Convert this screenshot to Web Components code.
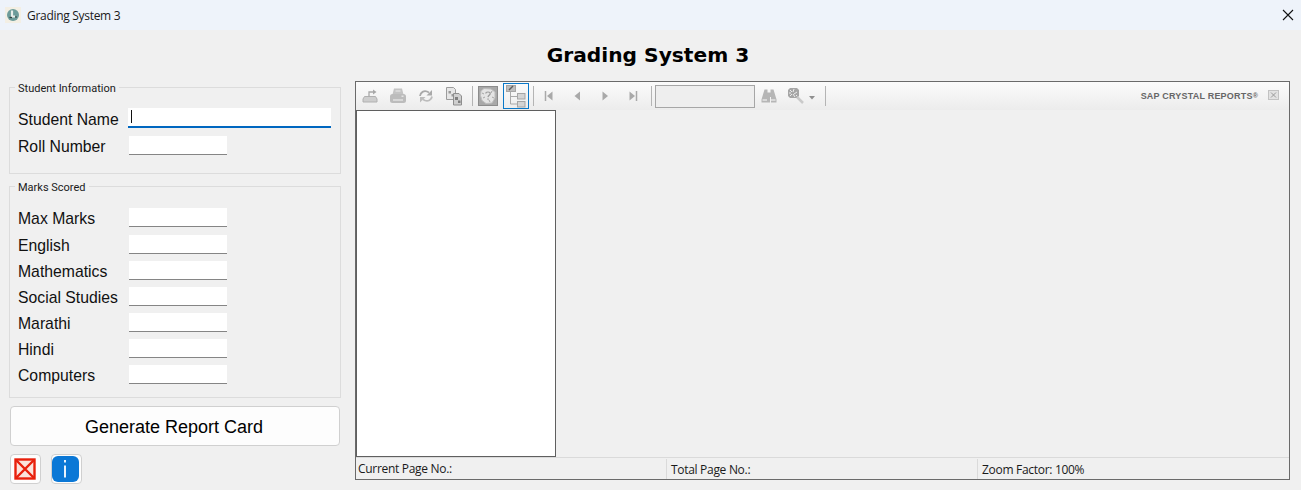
<!DOCTYPE html>
<html>
<head>
<meta charset="utf-8">
<title>Grading System 3</title>
<style>
  html, body { margin: 0; padding: 0; height: 100%; background: #f0f0f0; overflow: hidden; }
  body { font-family: 'Liberation Sans', sans-serif; }
</style>
</head>
<body>
<grading-window></grading-window>

<script>
class TitleBar extends HTMLElement {
	constructor() {
		super();
		this.attachShadow({ mode: 'open' });
		this.shadowRoot.innerHTML = `
      <style>
        :host { display: flex; align-items: center; height: 30px; background: #eef3fa; color: #1a1a1a; font: 12px 'Open Sans', sans-serif; letter-spacing: -0.3px; }
        .icon { width: 16px; height: 16px; margin: 0 6px 0 5px; }
        .text { flex: 1; }
        .close { width: 12px; height: 12px; margin-right: 7px; }
      </style>
      <svg class="icon" viewBox="0 0 16 16">
        <rect width="16" height="16" fill="#f3efe4"/>
        <circle cx="8" cy="8" r="6" fill="#6d9c9a"/>
        <path d="M7 3.500v6h3" fill="none" stroke="#e8eeea" stroke-width="2.200"/>
        <path d="M4.500 10.500h2.500" stroke="#33413f" stroke-width="1.300"/>
        <path d="M10 10h2" stroke="#33413f" stroke-width="1"/>
      </svg>
      <span class="text"><slot></slot></span>
      <svg class="close" viewBox="0 0 12 12"><path d="M1 1l10 10M11 1L1 11" stroke="#111" stroke-width="1.100" fill="none"/></svg>
    `;
	}
}

class GroupBox extends HTMLElement {
	constructor() {
		super();
		this.attachShadow({ mode: 'open' });
	}

	connectedCallback() {
		this.shadowRoot.innerHTML = `
      <style>
        :host { display: block; }
        fieldset { margin: -1px 0 0; padding: var(--pad-top, 13px) 8px var(--pad-bottom, 17px); border: 1px solid #dcdcdc; min-width: 0; }
        legend { margin-left: -3px; padding: 2px 3px 0; font: 11px/13px Roboto, sans-serif; color: #1a1a1a; }
      </style>
      <fieldset>
        <legend>${this.getAttribute('label')}</legend>
        <slot></slot>
      </fieldset>
    `;
	}
}

class FieldRow extends HTMLElement {
	constructor() {
		super();
		this.attachShadow({ mode: 'open' });
	}

	connectedCallback() {
		const focused = this.hasAttribute('focused');
		this.shadowRoot.innerHTML = `
      <style>
        :host { display: flex; align-items: flex-start; height: 20px; font: 15.75px/18px 'Liberation Sans', sans-serif; color: #111; }
        .label { width: ${focused ? 110 : 111}px; white-space: nowrap; padding-top: ${focused ? 3 : 2}px; }
        .box { box-sizing: border-box; width: 98px; height: 19px; background: #fff; border-bottom: 1px solid #858585; }
        .box.focused { width: 203px; height: 20px; border-bottom: 2px solid #0067c0; padding: 2px 0 0 3px; }
        .caret { display: block; width: 1px; height: 13px; background: #111; }
      </style>
      <span class="label">${this.getAttribute('label')}</span>
      <div class="box ${focused ? 'focused' : ''}" role="textbox">${focused ? '<span class="caret"></span>' : ''}</div>
    `;
	}
}

class ActionButton extends HTMLElement {
	constructor() {
		super();
		this.attachShadow({ mode: 'open' });
		this.shadowRoot.innerHTML = `
      <style>
        :host { display: flex; align-items: center; justify-content: center; box-sizing: border-box; height: 40px; padding: 2px 2px 0 0; background: #fdfdfd; border: 1px solid #d0d0d0; border-radius: 4px; font: 18px 'Liberation Sans', sans-serif; color: #000; }
      </style>
      <slot></slot>
    `;
	}
}

class IconButton extends HTMLElement {
	constructor() {
		super();
		this.attachShadow({ mode: 'open' });
		this.shadowRoot.innerHTML = `
      <style>
        :host { display: flex; align-items: center; justify-content: center; box-sizing: border-box; width: 31px; height: 30px; padding-right: 2px; background: #fdfdfd; border: 1px solid #d0d0d0; border-radius: 4px; }
      </style>
      <slot></slot>
    `;
	}
}

class ToolButton extends HTMLElement {
	constructor() {
		super();
		this.attachShadow({ mode: 'open' });
		this.shadowRoot.innerHTML = `
      <style>
        :host { display: flex; align-items: center; justify-content: center; width: 28px; height: 26px; flex: none; }
        :host([active]) { box-sizing: border-box; width: 26px; border: 1px solid #0a78c8; }
        :host([framed]) { box-sizing: border-box; width: 20px; height: 20px; border: 1px solid #8c8c8c; }
      </style>
      <slot></slot>
    `;
	}
}

class ToolSep extends HTMLElement {
	constructor() {
		super();
		this.attachShadow({ mode: 'open' });
		this.shadowRoot.innerHTML = `
      <style>
        :host { display: block; width: 1px; height: 20px; background: #b4b4b4; flex: none; margin: 0 var(--r, 5px) 0 var(--l, 5px); }
      </style>
    `;
	}
}

class ReportToolbar extends HTMLElement {
	constructor() {
		super();
		this.attachShadow({ mode: 'open' });
		this.shadowRoot.innerHTML = `
      <style>
        :host { display: flex; align-items: center; height: 28px; background: linear-gradient(#fbfbfb, #ececec); font-family: 'Liberation Sans', sans-serif; }
        svg { display: block; }
        .search { box-sizing: border-box; width: 100px; height: 23px; border: 1px solid #a6a6a6; background: #eeeeee; flex: none; }
        .spacer { flex: 1; }
        .brand { font: bold 9px 'Liberation Sans', sans-serif; color: #666; letter-spacing: 0.2px; white-space: nowrap; }
        .reg { font-size: 7px; vertical-align: 1px; }
        .hide { margin: 0 10px 2px 10px; }
      </style>
      <tool-button><svg width="18" height="18" viewBox="0 0 18 18">
        <path d="M2 12l1.500-2.500h11L16 12v3H2z" fill="#cdcdcd" stroke="#b0b0b0"/>
        <path d="M8 9.500V5h5" fill="none" stroke="#a8a8a8" stroke-width="1.300"/>
        <path d="M12 2.500l3.500 2.500L12 7.500z" fill="#a8a8a8"/>
      </svg></tool-button>
      <tool-button><svg width="18" height="18" viewBox="0 0 18 18">
        <path d="M5 1.500h8l1.500 6h-11z" fill="#c4c4c4"/>
        <path d="M6.500 4h5" stroke="#ececec"/>
        <rect x="1" y="7" width="16" height="9" rx="2.500" fill="#bcbcbc"/>
        <path d="M4 13h10" stroke="#e2e2e2" stroke-width="1.500"/>
        <rect x="12.500" y="8.500" width="2" height="1.500" fill="#e4e4e4"/>
      </svg></tool-button>
      <tool-button><svg width="18" height="18" viewBox="0 0 18 18">
        <path d="M3 9C3.500 5 7 3.500 10 4.500l2 1" fill="none" stroke="#a9a9a9" stroke-width="1.800"/>
        <path d="M15 3v5.500h-5.500z" fill="#a9a9a9"/>
        <path d="M15 9.500C14.500 13 11 14.500 8 13.500l-2-1" fill="none" stroke="#bcbcbc" stroke-width="1.800"/>
        <path d="M3 15.500V10h5.500z" fill="#bcbcbc"/>
      </svg></tool-button>
      <tool-button><svg width="18" height="20" viewBox="0 0 18 20">
        <path d="M1.500 1.500h7l2 2v10h-9z" fill="#e6e6e6" stroke="#9c9c9c"/>
        <path d="M3.500 5h2.500v2.500H3.500zM6.500 8h2.500v2.500H6.500z" fill="#9a9a9a"/>
        <path d="M8.500 7.500h5.500l2.500 2.500v9h-8z" fill="#cfcfcf" stroke="#8e8e8e"/>
        <path d="M10 11h3v3h-3zM13 14.500h2.500v2.500H13z" fill="#7f7f7f"/>
      </svg></tool-button>
      <tool-sep style="--l:4px;--r:5px"></tool-sep>
      <tool-button framed><svg width="18" height="18" viewBox="0 0 18 18">
        <rect width="18" height="18" fill="#a8a8a8"/>
        <path d="M2 4l3-2.500 7 .5 4 3v6l-3 5-6 .5-4-3-1.500-5z" fill="#e4e4e4" stroke="#bdbdbd"/>
        <path d="M3 6l2 1M4 11l2-1M13 4l-1 2M15 11l-2-1M11 15l-1-2" stroke="#a6a6a6"/>
        <path d="M6.800 6.500C6.800 4.500 11.200 4.500 11.200 6.500c0 1.800-2 1.600-2.200 3.600" fill="none" stroke="#9a9a9a" stroke-width="1.200"/>
        <path d="M8.400 11.500h1.300v1.300H8.400z" fill="#9a9a9a"/>
      </svg></tool-button>
      <span style="width:5px;flex:none"></span>
      <tool-button active><svg width="24" height="24" viewBox="0 0 24 24">
        <rect x="2.500" y="1.500" width="9" height="6" fill="#bdbdbd" stroke="#a5a5a5"/>
        <path d="M5 6l4-4" stroke="#5f5f5f" stroke-width="1.500"/>
        <path d="M6.500 7.500v12.500h6.500M6.500 12.500h6.500" fill="none" stroke="#a9a9a9"/>
        <rect x="13.500" y="9.500" width="7.500" height="5.500" fill="#d4d4d4" stroke="#a5a5a5"/>
        <rect x="13.500" y="17.500" width="7.500" height="5.500" fill="#d4d4d4" stroke="#a5a5a5"/>
      </svg></tool-button>
      <tool-sep style="--l:4px;--r:1px"></tool-sep>
      <tool-button><svg width="10" height="12" viewBox="0 0 10 12"><path d="M1.500 1v10" stroke="#a9a9a9" stroke-width="1.500"/><path d="M8.500 1.500v9L3 6z" fill="#a9a9a9"/></svg></tool-button>
      <tool-button><svg width="10" height="12" viewBox="0 0 10 12"><path d="M8 1.500v9L2.500 6z" fill="#a9a9a9"/></svg></tool-button>
      <tool-button><svg width="10" height="12" viewBox="0 0 10 12"><path d="M2.500 1.500v9L8 6z" fill="#a9a9a9"/></svg></tool-button>
      <tool-button><svg width="10" height="12" viewBox="0 0 10 12"><path d="M8.500 1v10" stroke="#a9a9a9" stroke-width="1.500"/><path d="M1.500 1.500v9L7 6z" fill="#a9a9a9"/></svg></tool-button>
      <tool-sep style="--l:4px;--r:3px"></tool-sep>
      <div class="search"></div>
      <tool-button><svg width="16" height="16" viewBox="0 0 16 16">
        <path d="M3.500 1.500h3v3h3v-3h3l3 10v3h-5.500V9h-1v5.500H.5v-3z" fill="#b6b6b6"/>
        <path d="M1.500 12h4.500M10 12h4.500" stroke="#d9d9d9" stroke-width="2"/>
      </svg></tool-button>
      <tool-button style="width:26px"><svg width="18" height="18" viewBox="0 0 18 18">
        <path d="M1 3l2-2h7l2 2v6l-2 2H3L1 9z" fill="#a6a6a6"/>
        <path d="M3 3l2 2M7 2L6 5M10 5L7 7M3 9l2-2M8 10L6 7M2 6h2M9 8l1 1" stroke="#ececec"/>
        <path d="M10 10l6 6" stroke="#cacaca" stroke-width="2.500"/>
      </svg></tool-button>
      <svg width="6" height="4" viewBox="0 0 6 4" style="flex:none;margin:3px 0 0 0"><path d="M0 0h6L3 3.500z" fill="#8f8f8f"/></svg>
      <tool-sep style="--l:10px;--r:0"></tool-sep>
      <span class="spacer"></span>
      <span class="brand">SAP CRYSTAL REPORTS<span class="reg">®</span></span>
      <svg class="hide" width="11" height="10" viewBox="0 0 11 10">
        <rect x=".5" y=".5" width="10" height="9" fill="#e2e2e2" stroke="#c2c2c2"/>
        <path d="M3 2.500l5 5M8 2.500l-5 5" stroke="#9a9a9a"/>
      </svg>
    `;
	}
}

class ReportViewer extends HTMLElement {
	constructor() {
		super();
		this.attachShadow({ mode: 'open' });
		this.shadowRoot.innerHTML = `
      <style>
        :host { display: flex; flex-direction: column; box-sizing: border-box; width: 935px; height: 399px; border: 1px solid #6a6a6a; background: #f0f0f0; }
        .body { flex: 1; display: flex; min-height: 0; }
        .tree { box-sizing: border-box; width: 200px; background: #fff; border: 1px solid #5f5f5f; }
        .status { display: grid; grid-template-columns: 310px 311px 1fr; height: 21px; border-top: 1px solid #dadada; font: 12px 'Open Sans', sans-serif; letter-spacing: -0.3px; color: #1a1a1a; }
        .status span { display: flex; align-items: center; padding-left: 2px; }
        .status span + span { border-left: 1px solid #dadada; padding-left: 4px; margin-top: 1px; }
      </style>
      <report-toolbar></report-toolbar>
      <div class="body"><div class="tree"></div></div>
      <div class="status">
        <span>Current Page No.:</span>
        <span>Total Page No.:</span>
        <span>Zoom Factor: 100%</span>
      </div>
    `;
	}
}

class GradingWindow extends HTMLElement {
	constructor() {
		super();
		this.attachShadow({ mode: 'open' });
		this.shadowRoot.innerHTML = `
      <style>
        :host { display: block; width: 1301px; height: 490px; background: #f0f0f0; }
        h1 { margin: 0; height: 51px; text-align: center; font: bold 20.2px/50px 'DejaVu Sans', sans-serif; color: #000; box-sizing: border-box; padding-right: 5px; }
        .main { display: flex; padding-left: 9px; gap: 14px; }
        .left { width: 332px; flex: none; display: flex; flex-direction: column; }
        .marks { margin-top: 6px; --pad-top: 13px; --pad-bottom: 12px; }
        .rows { display: flex; flex-direction: column; gap: 6px; }
        .rows.first { gap: 8px; }
        .rows field-row.wide-gap { margin: 1px 0; }
        action-button { margin: 8px 0 0 1px; width: 330px; }
        .icons { display: flex; gap: 10px; margin: 8px 0 0 1px; }
        svg { display: block; }
      </style>
      <title-bar>Grading System 3</title-bar>
      <h1>Grading System 3</h1>
      <div class="main">
        <div class="left">
          <group-box label="Student Information">
            <div class="rows first">
              <field-row label="Student Name" focused></field-row>
              <field-row label="Roll Number"></field-row>
            </div>
          </group-box>
          <group-box class="marks" label="Marks Scored">
            <div class="rows">
              <field-row class="wide-gap" label="Max Marks"></field-row>
              <field-row label="English"></field-row>
              <field-row label="Mathematics"></field-row>
              <field-row label="Social Studies"></field-row>
              <field-row label="Marathi"></field-row>
              <field-row label="Hindi"></field-row>
              <field-row label="Computers"></field-row>
            </div>
          </group-box>
          <action-button>Generate Report Card</action-button>
          <div class="icons">
            <icon-button><svg width="22" height="22" viewBox="0 0 22 22">
              <rect x="1.500" y="1.500" width="19" height="19" fill="#fbe3dc" stroke="#e8200c" stroke-width="2.400"/>
              <path d="M2 2l18 18M20 2L2 20" stroke="#e8200c" stroke-width="2.400"/>
            </svg></icon-button>
            <icon-button><svg width="27" height="26" viewBox="0 0 27 26">
              <rect width="27" height="26" rx="6" fill="#0b78d6"/>
              <rect x="12" y="9.500" width="2" height="12" fill="#e8f3fc"/>
              <rect x="12" y="4" width="2" height="2.500" fill="#e8f3fc"/>
            </svg></icon-button>
          </div>
        </div>
        <report-viewer></report-viewer>
      </div>
    `;
	}
}

customElements.define('title-bar', TitleBar);
customElements.define('group-box', GroupBox);
customElements.define('field-row', FieldRow);
customElements.define('action-button', ActionButton);
customElements.define('icon-button', IconButton);
customElements.define('tool-button', ToolButton);
customElements.define('tool-sep', ToolSep);
customElements.define('report-toolbar', ReportToolbar);
customElements.define('report-viewer', ReportViewer);
customElements.define('grading-window', GradingWindow);
</script>
</body>
</html>
